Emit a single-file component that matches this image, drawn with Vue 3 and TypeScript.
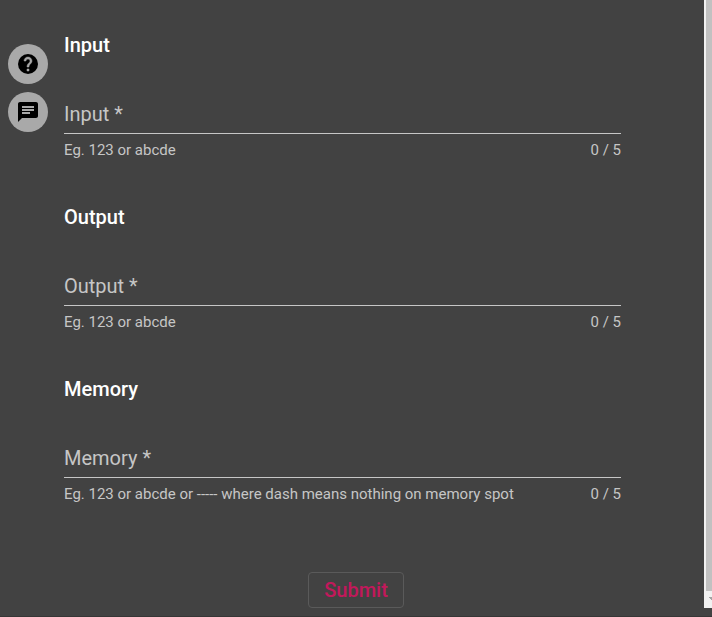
<script setup lang="ts">
import { reactive } from 'vue'

interface Field {
  id: string
  title: string
  hint: string
  value: string
}

const MAX_LENGTH = 5

const fields = reactive<Field[]>([
  { id: 'input', title: 'Input', hint: 'Eg. 123 or abcde', value: '' },
  { id: 'output', title: 'Output', hint: 'Eg. 123 or abcde', value: '' },
  { id: 'memory', title: 'Memory', hint: 'Eg. 123 or abcde or ----- where dash means nothing on memory spot', value: '' },
])
</script>

<template>
  <div class="dialog">
    <nav class="actions">
      <button type="button" class="round" aria-label="Help">
        <svg viewBox="0 0 24 24" width="24" height="24">
          <circle cx="12" cy="12" r="10" />
          <path class="mark" d="M13 19h-2v-2h2v2zm2.07-7.75l-.9.92C13.45 12.9 13 13.5 13 15h-2v-.5c0-1.1.45-2.1 1.17-2.83l1.24-1.26c.37-.36.59-.86.59-1.41 0-1.1-.9-2-2-2s-2 .9-2 2H8c0-2.21 1.79-4 4-4s4 1.79 4 4c0 .88-.36 1.68-.93 2.25z" />
        </svg>
      </button>
      <button type="button" class="round" aria-label="Feedback">
        <svg viewBox="0 0 24 24" width="24" height="24">
          <path d="M20 2H4c-1.1 0-1.99.9-1.99 2L2 22l4-4h14c1.1 0 2-.9 2-2V4c0-1.1-.9-2-2-2zM6 9h12v2H6V9zm8 5H6v-2h8v2zm4-6H6V6h12v2z" />
        </svg>
      </button>
    </nav>

    <form class="form" @submit.prevent>
      <section v-for="field in fields" :key="field.id" class="group">
        <h2 class="title">{{ field.title }}</h2>
        <div class="control">
          <label v-show="!field.value" class="label" :for="field.id">{{ field.title }} *</label>
          <input :id="field.id" v-model="field.value" class="entry" type="text" :maxlength="MAX_LENGTH" required />
        </div>
        <div class="notes">
          <span>{{ field.hint }}</span>
          <span>{{ field.value.length }} / {{ MAX_LENGTH }}</span>
        </div>
      </section>
      <button type="submit" class="submit">Submit</button>
    </form>

    <div class="scrollbar" aria-hidden="true">
      <div class="thumb"></div>
      <svg class="arrow" viewBox="0 0 8 17" width="8" height="17">
        <path d="M5 6h7v1h-1v1h-1v1H7V8H6V7H5z" />
      </svg>
    </div>
  </div>
</template>

<style>
body {
  margin: 0;
  background: #424242;
}
</style>

<style scoped>
.dialog {
  display: flex;
  padding-bottom: 8px;
  border-bottom: 1px solid #363636;
  background: #424242;
  color: #c6c6c6;
  font-family: Roboto, sans-serif;
}

.actions {
  display: flex;
  flex-direction: column;
  gap: 8px;
  padding: 44px 16px 0 8px;
}

.round {
  display: grid;
  place-items: center;
  width: 40px;
  height: 40px;
  padding: 0;
  border: 0;
  border-radius: 50%;
  background: #a9a9a9;
  cursor: pointer;
}

.mark {
  fill: #a9a9a9;
  stroke: #a9a9a9;
  stroke-width: 0.5;
}

.form {
  flex: 1;
  display: flex;
  flex-direction: column;
  padding: 32px 56px 0 0;
}

.group {
  margin: 0 27px 44px 0;
}

.title {
  margin: 0 0 42px;
  color: #fff;
  font-size: 20px;
  font-weight: 500;
  line-height: 26px;
}

.control {
  display: grid;
  border-bottom: 1px solid #c6c6c6;
}

.label,
.entry {
  grid-area: 1 / 1;
  font-size: 20px;
  line-height: 28px;
}

.label {
  margin-bottom: 5px;
  pointer-events: none;
}

.entry {
  min-width: 0;
  padding: 0;
  border: 0;
  outline: 0;
  background: transparent;
  color: #fff;
  font-family: inherit;
}

.notes {
  display: flex;
  justify-content: space-between;
  gap: 16px;
  padding-top: 6px;
  font-size: 15px;
  line-height: 20px;
}

.submit {
  align-self: center;
  margin-top: 24px;
  padding: 0 15px;
  border: 1px solid #5a5a5a;
  border-radius: 4px;
  background: transparent;
  color: #c2185b;
  font-family: inherit;
  font-size: 20px;
  font-weight: 500;
  line-height: 34px;
  cursor: pointer;
}

.scrollbar {
  display: flex;
  flex-direction: column;
  width: 8px;
  background: #f1f1f1;
}

.thumb {
  flex: 1;
  margin-left: 2px;
  background: #c1c1c1;
}

.arrow {
  display: block;
  fill: #a3a3a3;
}
</style>
